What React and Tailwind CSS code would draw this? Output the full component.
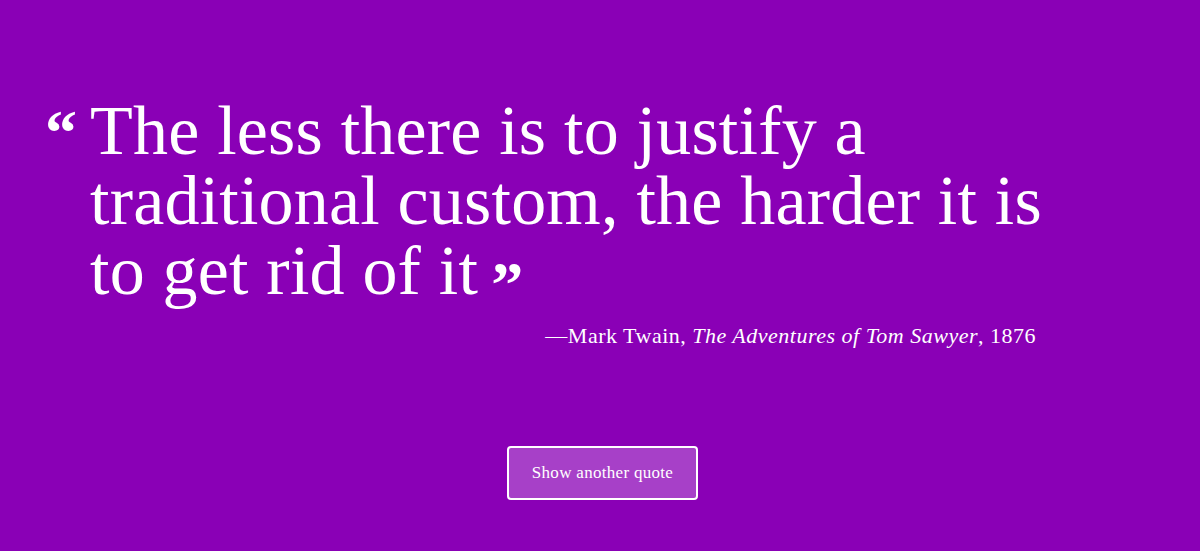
export default function App() {
  return (
    <div className="min-h-screen w-full bg-[#8a00b6] text-white flex flex-col" style={{ fontFamily: '"Liberation Serif", "DejaVu Serif", serif' }}>
      <div className="pt-[96px] pl-[45px] pr-[60px]">
        <div className="flex items-baseline">
          <span className="w-[45px] shrink-0 text-[64px] leading-none font-bold">&ldquo;</span>
          <p className="text-[70px] leading-[70px] tracking-[0.2px]">
            The less there is to justify a<br />
            traditional custom, the harder it is<br />
            to get rid of it<span className="relative top-[12px] text-[64px] font-bold ml-[13px] leading-none">&rdquo;</span>
          </p>
        </div>
        <div className="w-[991px] text-right text-[22px] leading-[24px] mt-[18px] tracking-[0.5px]">
          &mdash;Mark Twain, <i>The Adventures of Tom Sawyer</i>, 1876
        </div>
      </div>
      <div className="flex justify-center mt-[98px] pl-[5px]">
        <button className="w-[191px] h-[54px] border-2 border-white rounded-[4px] bg-white/25 text-[17px] tracking-[0.3px] text-white">
          Show another quote
        </button>
      </div>
    </div>
  );
}
